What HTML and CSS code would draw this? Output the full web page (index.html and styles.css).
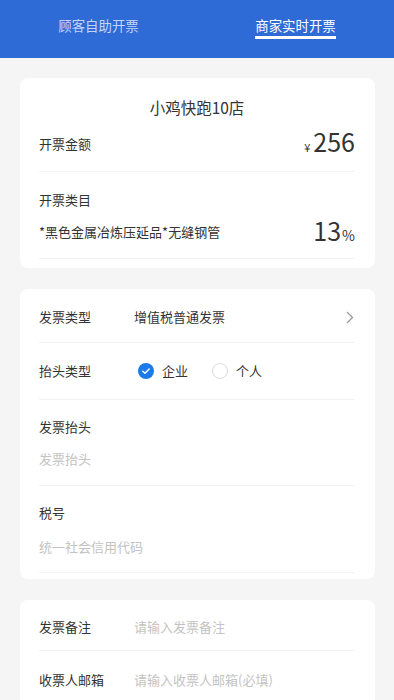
FILE: index.html
```html
<!DOCTYPE html>
<html lang="zh-CN">
<head>
<meta charset="utf-8">
<meta name="viewport" content="width=device-width, initial-scale=1">
<title>开票</title>
<link rel="stylesheet" href="styles.css">
</head>
<body>
<header class="tabs">
  <div class="tab"><span class="tab-text">顾客自助开票</span></div>
  <div class="tab active"><span class="tab-text">商家实时开票</span></div>
</header>
<main class="main">
  <section class="card card-info">
    <div class="shop">小鸡快跑10店</div>
    <div class="row row-amount">
      <span class="label">开票金额</span>
      <span class="amount"><span class="yen">¥</span><span class="num">256</span></span>
    </div>
    <div class="block block-cat">
      <div class="label">开票类目</div>
      <div class="cat-line">
        <span class="cat">*黑色金属冶炼压延品*无缝钢管</span>
        <span class="rate"><span class="num">13</span><span class="pct">%</span></span>
      </div>
    </div>
  </section>

  <section class="card card-form">
    <div class="row row-type">
      <span class="label">发票类型</span>
      <span class="value">增值税普通发票</span>
      <svg class="chev" width="8" height="13" viewBox="0 0 8 13"><path d="M1 1 L6.5 6.5 L1 12" fill="none" stroke="#9a9a9a" stroke-width="1.3"/></svg>
    </div>
    <div class="row row-head">
      <span class="label">抬头类型</span>
      <div class="radios">
        <span class="radio checked"><svg width="16" height="16" viewBox="0 0 16 16"><circle cx="8" cy="8" r="8" fill="#1b7bea"/><path d="M4.8 8.2 L7 10.2 L11.2 6" fill="none" stroke="#fff" stroke-width="1.4" stroke-linecap="round" stroke-linejoin="round"/></svg></span>
        <span class="radio-text">企业</span>
        <span class="radio empty"></span>
        <span class="radio-text">个人</span>
      </div>
    </div>
    <div class="block block-title">
      <div class="label">发票抬头</div>
      <div class="placeholder">发票抬头</div>
    </div>
    <div class="block block-tax">
      <div class="label">税号</div>
      <div class="placeholder">统一社会信用代码</div>
    </div>
  </section>

  <section class="card card-extra">
    <div class="row row-note">
      <span class="label">发票备注</span>
      <span class="placeholder">请输入发票备注</span>
    </div>
    <div class="row row-mail">
      <span class="label">收票人邮箱</span>
      <span class="placeholder">请输入收票人邮箱(必填)</span>
    </div>
  </section>
</main>
</body>
</html>
```

FILE: styles.css
```css
* { box-sizing: border-box; }
html, body { margin: 0; padding: 0; }
body {
  background: #f5f5f5;
  font-family: "Noto Sans CJK SC", "Noto Sans", sans-serif;
  color: #333;
  font-size: 13px;
  line-height: 20px;
}
.tabs {
  height: 58px;
  background: #2e6bd7;
  display: flex;
}
.tab {
  flex: 1;
  display: flex;
  justify-content: center;
  padding-top: 15px;
}
.tab-text {
  display: inline-block;
  font-size: 13.4px;
  line-height: 20px;
  color: rgba(255,255,255,0.72);
  padding-bottom: 1px;
  border-bottom: 3px solid transparent;
  height: 24px;
}
.tab.active .tab-text {
  color: #fff;
  border-bottom-color: #fff;
}
.main {
  padding: 20px 19px 0 20px;
}
.card {
  background: #fff;
  border-radius: 8px;
  padding: 0 20px 0 19px;
  margin-bottom: 21px;
}
.card-info { padding-bottom: 9px; }
.card-form { padding-bottom: 6px; }
.shop {
  padding-top: 19px;
  font-size: 15.5px;
  line-height: 20px;
  text-align: center;
  color: #333;
}
.label { color: #333; font-size: 13px; }
.row {
  display: flex;
  align-items: center;
  border-bottom: 1px solid #f2f2f2;
}
.row .label { width: 95px; flex: none; }
.row-amount { height: 55px; justify-content: space-between; }
.amount { display: flex; align-items: baseline; }
.yen { font-size: 11px; margin-right: 3px; }
.num { font-size: 25px; color: #333; font-weight: 400; }
.block { border-bottom: 1px solid #f2f2f2; }
.block-cat { padding: 18px 0 16px; }
.cat-line {
  margin-top: 12px;
  display: flex;
  justify-content: space-between;
  align-items: center;
  height: 20px;
}
.cat { font-size: 13px; }
.rate { display: flex; align-items: baseline; }
.pct { font-size: 14px; margin-left: 1px; }
.row-type { height: 54px; padding-top: 3px; }
.value { flex: 1; }
.chev { margin-right: 1px; }
.row-head { height: 57px; }
.radios { display: flex; align-items: center; padding-left: 4px; }
.radio { width: 16px; height: 16px; display: block; flex: none; }
.radio svg { display: block; }
.radio.empty { border: 1px solid #dcdcdc; border-radius: 50%; margin-left: 24px; }
.radio-text { margin-left: 8px; }
.placeholder { color: #c3c3c3; font-size: 13px; }
.block-title { padding: 17px 0 16px; }
.block-title .placeholder { margin-top: 12px; }
.block-tax { padding: 17px 0 15px; }
.block-tax .placeholder { margin-top: 14px; }
.row-note { height: 51px; padding-top: 4px; }
.row-mail { height: 56px; padding-top: 2px; border-bottom: none; }
```
